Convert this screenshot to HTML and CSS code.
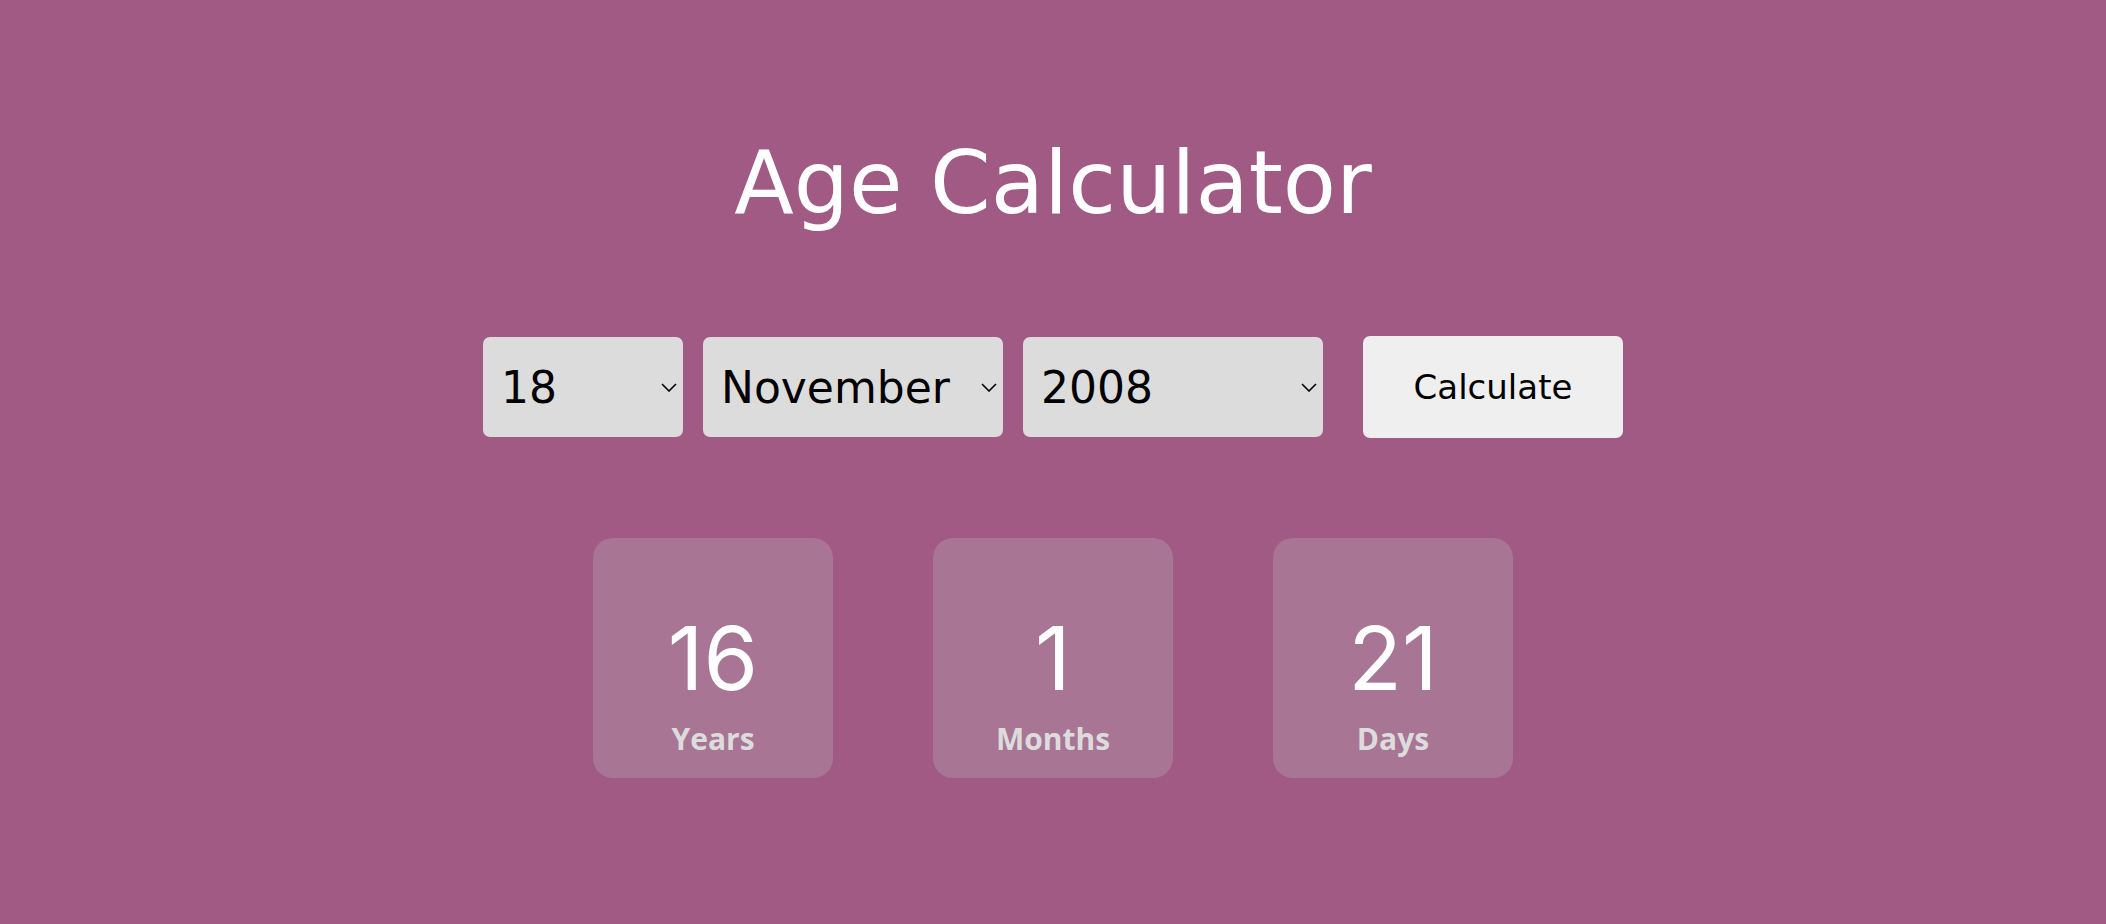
FILE: index.html
```html
<!DOCTYPE html>
<html lang="en">
<head>
<meta charset="utf-8">
<title>Age Calculator</title>
<link rel="stylesheet" href="styles.css">
</head>
<body>
<main class="app">
  <h1 class="title">Age Calculator</h1>
  <div class="controls">
    <div class="sel-wrap sel-day">
      <select class="sel"><option>18</option></select>
      <svg class="chev" width="16" height="9" viewBox="0 0 16 9"><path d="M1 1 L8 8 L15 1" fill="none" stroke="#000" stroke-width="1.6"/></svg>
    </div>
    <div class="sel-wrap sel-month">
      <select class="sel"><option>November</option></select>
      <svg class="chev" width="16" height="9" viewBox="0 0 16 9"><path d="M1 1 L8 8 L15 1" fill="none" stroke="#000" stroke-width="1.6"/></svg>
    </div>
    <div class="sel-wrap sel-year">
      <select class="sel"><option>2008</option></select>
      <svg class="chev" width="16" height="9" viewBox="0 0 16 9"><path d="M1 1 L8 8 L15 1" fill="none" stroke="#000" stroke-width="1.6"/></svg>
    </div>
    <button class="calc" type="button">Calculate</button>
  </div>
  <div class="results">
    <div class="card"><div class="num">16</div><div class="label">Years</div></div>
    <div class="card"><div class="num">1</div><div class="label">Months</div></div>
    <div class="card"><div class="num">21</div><div class="label">Days</div></div>
  </div>
</main>
</body>
</html>
```
FILE: styles.css
```css
html, body {
  margin: 0;
  height: 100%;
}

body {
  background: #a05a84;
  font-family: "DejaVu Sans", "Open Sans", sans-serif;
}

.app {
  display: flex;
  flex-direction: column;
  align-items: center;
  padding-top: 133px;
}

.title {
  margin: 0;
  font-size: 87px;
  line-height: 100px;
  font-weight: 400;
  color: #ffffff;
}

.controls {
  display: flex;
  align-items: center;
  gap: 20px;
  margin-top: 103px;
}

.sel-wrap {
  position: relative;
  height: 100px;
}

.sel-day { width: 200px; }
.sel-month { width: 300px; }
.sel-year { width: 300px; }

.sel {
  -webkit-appearance: none;
  appearance: none;
  width: 100%;
  height: 100px;
  border: none;
  border-radius: 7px;
  background-color: #dcdcdc;
  color: #000;
  font-family: "DejaVu Sans", sans-serif;
  font-size: 44px;
  padding: 0 30px 0 18px;
  box-sizing: border-box;
  outline: none;
}

.chev {
  position: absolute;
  right: 6px;
  top: 46px;
  pointer-events: none;
}

.calc {
  margin-left: 20px;
  width: 260px;
  height: 102px;
  border: none;
  border-radius: 7px;
  background: #efefef;
  color: #000;
  font-family: "DejaVu Sans", sans-serif;
  font-size: 34px;
  padding: 0;
}

.results {
  display: flex;
  gap: 100px;
  margin-top: 100px;
}

.card {
  width: 240px;
  height: 240px;
  box-sizing: border-box;
  border-radius: 20px;
  background: #a87694;
  display: flex;
  flex-direction: column;
  align-items: center;
  padding-top: 76px;
}

.num {
  font-family: "Inter", "DejaVu Sans", sans-serif;
  font-size: 88px;
  line-height: 88px;
  font-weight: 400;
  color: #ffffff;
}

.label {
  margin-top: 17px;
  font-family: "Open Sans", sans-serif;
  font-size: 30px;
  line-height: 40px;
  font-weight: 700;
  color: #dcdcdc;
}
```
